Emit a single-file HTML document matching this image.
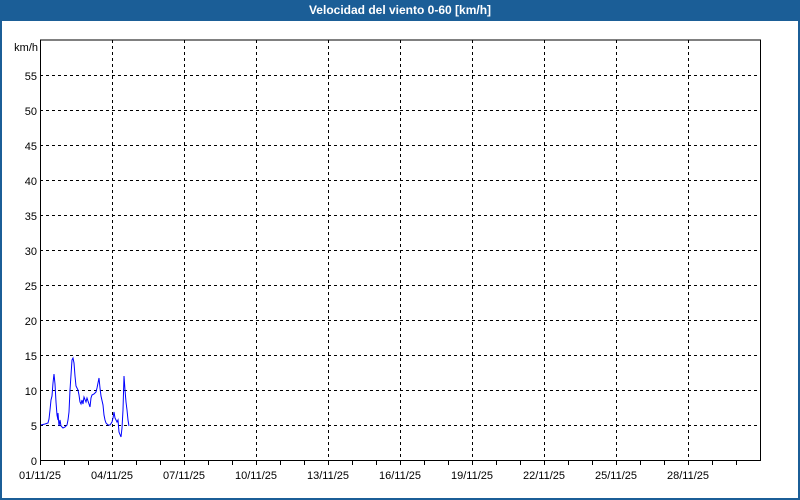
<!DOCTYPE html>
<html><head><style>
body{margin:0;width:800px;height:500px;overflow:hidden;background:#fff;font-family:"Liberation Sans",sans-serif}
.win{position:absolute;left:0;top:0;width:796px;height:498px;border:2px solid #1b5e97;border-top:none;border-bottom-width:2px}
.title{position:absolute;left:0;top:0;width:800px;height:21px;background:#1b5e97;color:#fff;font-weight:bold;font-size:12px;text-align:center;line-height:21px}
</style></head><body>
<div class="win"></div>
<div class="title">Velocidad del viento 0-60 [km/h]</div>
<svg width="800" height="500" style="position:absolute;left:0;top:0" font-family="Liberation Sans, sans-serif" font-size="11" fill="#000">
<g stroke="#000" stroke-width="1" stroke-dasharray="3,3" fill="none">
<path d="M112.5 40V460M184.5 40V460M256.5 40V460M328.5 40V460M400.5 40V460M472.5 40V460M544.5 40V460M616.5 40V460M688.5 40V460"/>
<path d="M40 75.5H760M40 110.5H760M40 145.5H760M40 180.5H760M40 215.5H760M40 250.5H760M40 285.5H760M40 320.5H760M40 355.5H760M40 390.5H760M40 425.5H760"/>
</g>
<path d="M40.5 40V460.5H760.5V40H40" stroke="#000" fill="none"/>
<g stroke="#000"><path d="M64.5 461v4M88.5 461v4M112.5 461v4M136.5 461v4M160.5 461v4M184.5 461v4M208.5 461v4M232.5 461v4M256.5 461v4M280.5 461v4M304.5 461v4M328.5 461v4M352.5 461v4M376.5 461v4M400.5 461v4M424.5 461v4M448.5 461v4M472.5 461v4M496.5 461v4M520.5 461v4M544.5 461v4M568.5 461v4M592.5 461v4M616.5 461v4M640.5 461v4M664.5 461v4M688.5 461v4M712.5 461v4M736.5 461v4M40.5 461v4"/></g>
<polyline fill="none" stroke="#0000ff" stroke-width="1" points="41,425 45,424 48,423 49,419 50,410 51,400 52,396 53,383 54,374 55,384 56,402 57,415 58,420 58,413 59,426 60,420 61,426 63,428 65,427 67,425 68,420 69,412 70,390 71,375 72,360 73,358 74,363 75,376 76,386 77,388 78,390 79,395 80,402 81,404 82,400 83,404 84,397 86,402 87,398 89,404 90,407 91,398 92,395 94,394 96,392 97,388 98,383 99,378 100,388 101,396 103,405 104,415 105,420 106,423 108,425 110,425 112,422 113,418 114,412 115,418 117,422 118,420 119,432 121,437 122,428 123,410 124,376 125,390 126,402 127,410 128,420 129,426"/>
<g text-anchor="end">
<text x="38" y="51">km/h</text>
<text x="37" y="80">55</text><text x="37" y="115">50</text><text x="37" y="150">45</text><text x="37" y="185">40</text><text x="37" y="220">35</text><text x="37" y="255">30</text><text x="37" y="290">25</text><text x="37" y="325">20</text><text x="37" y="360">15</text><text x="37" y="395">10</text><text x="37" y="430">5</text><text x="37" y="465">0</text>
</g>
<g text-anchor="middle">
<text x="40" y="479">01/11/25</text><text x="112" y="479">04/11/25</text><text x="184" y="479">07/11/25</text><text x="256" y="479">10/11/25</text><text x="328" y="479">13/11/25</text><text x="400" y="479">16/11/25</text><text x="472" y="479">19/11/25</text><text x="544" y="479">22/11/25</text><text x="616" y="479">25/11/25</text><text x="688" y="479">28/11/25</text>
</g>
</svg>
</body></html>
